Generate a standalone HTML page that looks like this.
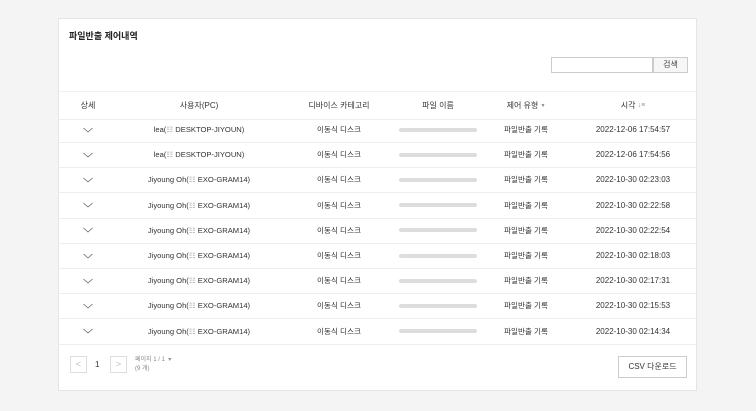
<html><head><style>
body{margin:0;width:756px;height:411px;background:#f4f4f4;font-family:"Liberation Sans","Noto Sans CJK KR",sans-serif;position:relative;overflow:hidden}
.p{position:absolute;left:58px;top:18px;width:639px;height:373px;background:#fff;border:1px solid #e4e4e4;box-sizing:border-box}
.t{position:absolute;left:10px;top:10px;font-size:9px;font-weight:bold;color:#222}
.s{position:absolute;left:492px;top:38px;width:102px;height:16px;border:1px solid #ccc;box-sizing:border-box}
.sb{position:absolute;left:594px;top:38px;width:35px;height:16px;border:1px solid #ccc;background:#f6f6f6;box-sizing:border-box;font-size:8px;color:#444;text-align:center;line-height:14px}
.r{position:absolute;left:0;width:637px;height:25px;border-bottom:1px solid #eee;font-size:7.6px;color:#333}
.r>div{position:absolute;top:0;height:100%;display:flex;align-items:center;justify-content:center;width:160px;margin-left:-80px;white-space:nowrap}
.h{font-size:8px;color:#333;border-top:1px solid #f1f1f1}
.bar{display:block;width:78px;height:4px;background:#ddd;border-radius:2px}
.chev{width:10px;height:10px;display:block}
.pg{position:absolute;width:17px;height:17px;border:1px solid #ddd;box-sizing:border-box;color:#bbb;font-size:9px;text-align:center;line-height:15px}
</style></head><body>
<div class="p">
<div class="t">파일반출 제어내역</div>
<div class="s"></div><div class="sb">검색</div>
<div class="r h" style="top:72px;height:27px"><div style="left:29px">상세</div><div style="left:140px">사용자(PC)</div><div style="left:280px">디바이스 카테고리</div><div style="left:379px">파일 이름</div><div style="left:467px">제어 유형&nbsp;<span style="font-size:5px;color:#888">▼</span></div><div style="left:574px">시각&nbsp;<span style="color:#999;font-size:7px">↓≡</span></div></div>
</div>
<div id="rows"></div>
<script>
var d=[["lea(","DESKTOP-JIYOUN)","2022-12-06 17:54:57"],["lea(","DESKTOP-JIYOUN)","2022-12-06 17:54:56"],["Jiyoung Oh(","EXO-GRAM14)","2022-10-30 02:23:03"],["Jiyoung Oh(","EXO-GRAM14)","2022-10-30 02:22:58"],["Jiyoung Oh(","EXO-GRAM14)","2022-10-30 02:22:54"],["Jiyoung Oh(","EXO-GRAM14)","2022-10-30 02:18:03"],["Jiyoung Oh(","EXO-GRAM14)","2022-10-30 02:17:31"],["Jiyoung Oh(","EXO-GRAM14)","2022-10-30 02:15:53"],["Jiyoung Oh(","EXO-GRAM14)","2022-10-30 02:14:34"]];
var h='';d.forEach(function(x,i){h+='<div class="r" style="left:59px;top:'+(117+i*25.2)+'px"><div style="left:29px"><svg class="chev" viewBox="0 0 10 10"><path d="M0.5 3l4.5 4 4.5-4" fill="none" stroke="#666" stroke-width="0.8"/></svg></div><div style="left:140px">'+x[0]+'<span style="color:#aaa">☷</span>&nbsp;'+x[1]+'</div><div style="left:280px">이동식 디스크</div><div style="left:379px"><span class="bar"></span></div><div style="left:467px">파일반출 기록</div><div style="left:574px;font-size:8px">'+x[2]+'</div></div>'});
document.getElementById('rows').innerHTML=h;
</script>
<div class="pg" style="left:70px;top:356px">&lt;</div>
<div style="position:absolute;left:95px;top:360px;font-size:8px;color:#333">1</div>
<div class="pg" style="left:110px;top:356px">&gt;</div>
<div style="position:absolute;left:135px;top:356px;font-size:6px;color:#888;line-height:9px">페이지 1 / 1 &nbsp;▾<br>(9 개)</div>
<div style="position:absolute;left:618px;top:356px;width:69px;height:22px;border:1px solid #ccc;box-sizing:border-box;font-size:8px;color:#333;text-align:center;line-height:20px">CSV 다운로드</div>
</body></html>
